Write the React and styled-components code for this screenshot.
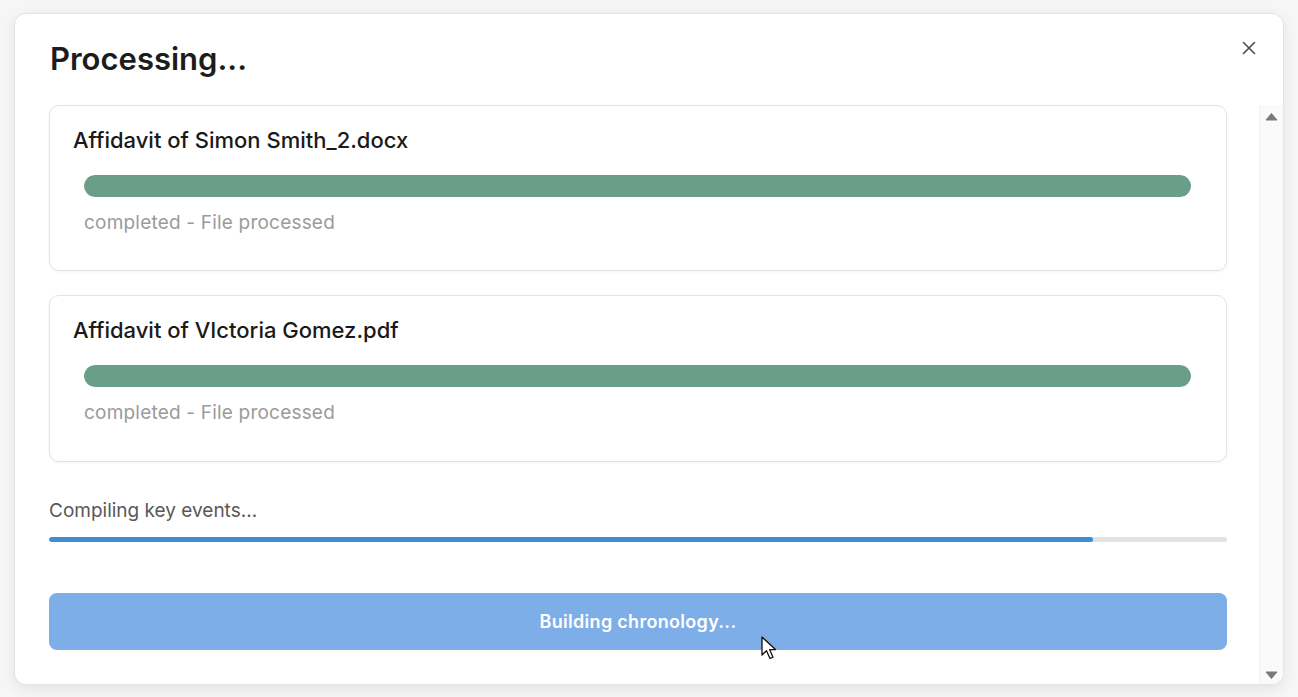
import React from 'react';
import styled, { createGlobalStyle } from 'styled-components';

const GlobalStyle = createGlobalStyle`
  html, body {
    margin: 0;
    padding: 0;
    background: #f6f6f6;
    font-family: Inter, "Liberation Sans", Arial, sans-serif;
    -webkit-font-smoothing: antialiased;
  }
  * { box-sizing: border-box; }
`;

const Page = styled.div`
  width: 1298px;
  height: 697px;
  padding: 13px 14px 12px 14px;
`;

const Modal = styled.div`
  height: 672px;
  background: #fff;
  border: 1px solid #e4e4e4;
  border-radius: 12px;
  box-shadow: 0 4px 14px rgba(0, 0, 0, 0.08);
  display: flex;
  flex-direction: column;
  overflow: hidden;
`;

const Header = styled.div`
  display: flex;
  justify-content: space-between;
  align-items: flex-start;
  height: 91px;
  flex-shrink: 0;
  padding: 27px 27px 0 35px;
`;

const Title = styled.h1`
  margin: 0;
  font-size: 31px;
  line-height: 36px;
  font-weight: 600;
  color: #1c1c1c;
`;

const CloseButton = styled.button`
  border: none;
  background: none;
  padding: 0;
  width: 14px;
  height: 14px;
  display: flex;
  color: #444;
  cursor: pointer;
`;

const Body = styled.div`
  flex: 1;
  display: flex;
  min-height: 0;
`;

const Content = styled.div`
  flex: 1;
  display: flex;
  flex-direction: column;
  padding: 0 32px 34px 34px;
  > * { flex-shrink: 0; }
`;

const Scrollbar = styled.div`
  width: 24px;
  background: #fafafa;
  border-left: 1px solid #f0f0f0;
  display: flex;
  flex-direction: column;
  justify-content: space-between;
  align-items: center;
  padding: 8px 0 5px;
`;

const FileCard = styled.div`
  border: 1px solid #e3e3e3;
  border-radius: 10px;
  box-shadow: 0 1px 3px rgba(0, 0, 0, 0.05);
  padding: 20px 35px 0 23px;
  height: ${p => p.$height}px;
  margin-bottom: 24px;
`;

const FileName = styled.div`
  font-size: 22px;
  line-height: 28px;
  font-weight: 500;
  color: #1a1a1a;
`;

const FileBarTrack = styled.div`
  margin: 21px 0 0 11px;
  height: 22px;
  border-radius: 11px;
  background: #ececec;
  overflow: hidden;
`;

const FileBarFill = styled.div`
  height: 100%;
  border-radius: 11px;
  background: #699f88;
`;

const FileStatus = styled.div`
  margin: 13px 0 0 11px;
  font-size: 19px;
  line-height: 26px;
  letter-spacing: 0.2px;
  color: #9b9b9b;
`;

const StepLabel = styled.div`
  margin-top: 12px;
  font-size: 19px;
  line-height: 26px;
  color: #585858;
`;

const StepTrack = styled.div`
  margin-top: 13px;
  height: 5px;
  border-radius: 3px;
  background: #e2e2e2;
  overflow: hidden;
`;

const StepFill = styled.div`
  height: 100%;
  background: #3a8fd5;
  border-radius: 3px;
`;

const ButtonWrap = styled.div`
  position: relative;
  margin-top: 51px;
`;

const PrimaryButton = styled.button`
  width: 100%;
  height: 57px;
  border: none;
  border-radius: 8px;
  background: #7eaee8;
  color: #fff;
  font-family: inherit;
  font-size: 18px;
  font-weight: 600;
  letter-spacing: 0.3px;
  cursor: default;
`;

const Pointer = styled.svg`
  position: absolute;
  left: 712px;
  top: 43px;
  pointer-events: none;
`;

const files = [
  { name: 'Affidavit of Simon Smith_2.docx', status: 'completed - File processed', progress: 100, height: 166 },
  { name: 'Affidavit of VIctoria Gomez.pdf', status: 'completed - File processed', progress: 100, height: 167 },
];

function Arrow({ down }) {
  return (
    <svg width="13" height="8" viewBox="0 0 13 8">
      <path
        d={down ? 'M1 1 L12 1 L6.5 7.5 Z' : 'M1 7 L12 7 L6.5 0.5 Z'}
        fill="#7a7a7a"
        strokeLinejoin="round"
        stroke="#7a7a7a"
        strokeWidth="1"
      />
    </svg>
  );
}

export default function App() {
  return (
    <>
      <GlobalStyle />
      <Page>
        <Modal>
          <Header>
            <Title>Processing...</Title>
            <CloseButton aria-label="Close">
              <svg width="14" height="14" viewBox="0 0 14 14">
                <path d="M1.5 1.5 L12.5 12.5 M12.5 1.5 L1.5 12.5" stroke="#4a4a4a" strokeWidth="1.6" strokeLinecap="round" />
              </svg>
            </CloseButton>
          </Header>
          <Body>
            <Content>
              {files.map(f => (
                <FileCard key={f.name} $height={f.height}>
                  <FileName>{f.name}</FileName>
                  <FileBarTrack>
                    <FileBarFill style={{ width: `${f.progress}%` }} />
                  </FileBarTrack>
                  <FileStatus>{f.status}</FileStatus>
                </FileCard>
              ))}
              <StepLabel>Compiling key events...</StepLabel>
              <StepTrack>
                <StepFill style={{ width: '88.6%' }} />
              </StepTrack>
              <ButtonWrap>
                <PrimaryButton disabled>Building chronology...</PrimaryButton>
                <Pointer width="18" height="26" viewBox="0 0 18 26">
                  <path d="M1 1 L1 19 L5.5 14.8 L9 22.5 L12 21.2 L8.6 13.6 L14.5 13.6 Z" fill="#fff" stroke="#111" strokeWidth="1.3" strokeLinejoin="round" />
                </Pointer>
              </ButtonWrap>
            </Content>
            <Scrollbar>
              <Arrow />
              <Arrow down />
            </Scrollbar>
          </Body>
        </Modal>
      </Page>
    </>
  );
}
